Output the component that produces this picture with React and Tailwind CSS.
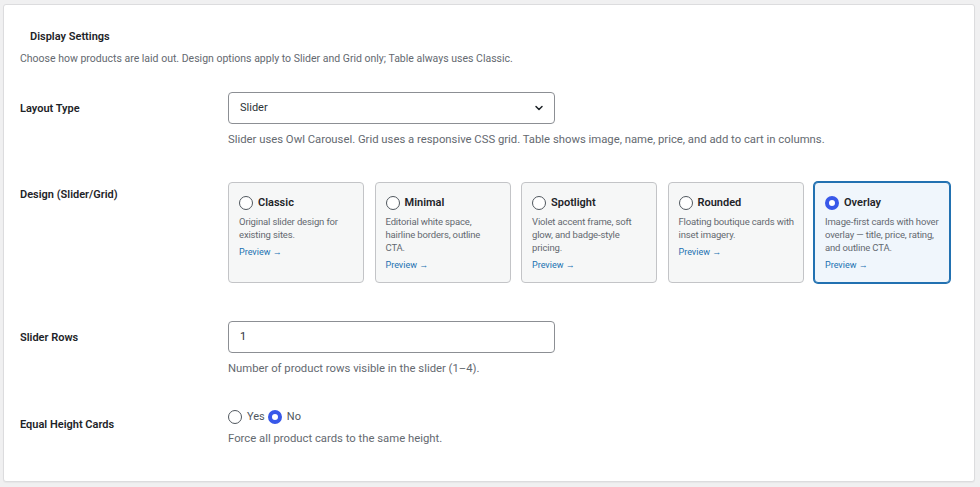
import { useState } from 'react'

const designs = [
    { id: 'classic', name: 'Classic', lines: ['Original slider design for', 'existing sites.'] },
    { id: 'minimal', name: 'Minimal', lines: ['Editorial white space,', 'hairline borders, outline', 'CTA.'] },
    { id: 'spotlight', name: 'Spotlight', lines: ['Violet accent frame, soft', 'glow, and badge-style', 'pricing.'] },
    { id: 'rounded', name: 'Rounded', lines: ['Floating boutique cards with', 'inset imagery.'] },
    { id: 'overlay', name: 'Overlay', lines: ['Image-first cards with hover', 'overlay — title, price, rating,', 'and outline CTA.'] },
]

function Radio({ checked }) {
    return (
        <span
            className={
                checked
                    ? 'inline-block h-[14px] w-[14px] shrink-0 rounded-full border-[4px] border-[#3858e9] bg-white'
                    : 'inline-block h-[14px] w-[14px] shrink-0 rounded-full border border-[#50575e] bg-white'
            }
        />
    )
}

function Row({ label, labelPad, top, children }) {
    return (
        <div className={`flex items-start ${top}`}>
            <div className={`w-[208px] shrink-0 text-[11px] font-semibold leading-4 text-[#1d2327] ${labelPad}`}>
                {label}
            </div>
            <div className="flex-1">{children}</div>
        </div>
    )
}

export default function App() {
    const [design, setDesign] = useState('overlay')
    const [equal, setEqual] = useState('no')

    return (
        <div
            className="h-[487px] w-[980px] overflow-hidden bg-[#f0f0f1] pl-[3px] pt-[4px]"
            style={{ fontFamily: 'Roboto, "Noto Sans", sans-serif' }}
        >
            <div className="h-[478px] w-[972px] rounded-[3px] border border-[#dcdcde] bg-white px-[16px] shadow-[0_1px_1px_rgba(0,0,0,0.04)]">
                <h2 className="ml-[10px] mt-[24px] text-[11px] font-semibold leading-4 text-[#1d2327]">
                    Display Settings
                </h2>
                <p className="mt-[6px] text-[10.5px] leading-4 text-[#646970]">
                    Choose how products are laid out. Design options apply to Slider and Grid only; Table always uses Classic.
                </p>

                <Row label="Layout Type" labelPad="pt-[9px]" top="mt-[25px]">
                    <div className="flex h-[32px] w-[327px] items-center justify-between rounded-[4px] border border-[#8c8f94] bg-white pl-[11px] pr-[10px] text-[11px] text-[#2c3338]">
                        <span>Slider</span>
                        <svg width="10" height="10" viewBox="0 0 10 10" fill="none">
                            <path d="M2 3.5 L5 6.5 L8 3.5" stroke="#1d2327" strokeWidth="1.5" strokeLinecap="round" strokeLinejoin="round" />
                        </svg>
                    </div>
                    <p className="mt-[8px] text-[11.3px] leading-4 text-[#646970]">
                        Slider uses Owl Carousel. Grid uses a responsive CSS grid. Table shows image, name, price, and add to cart in columns.
                    </p>
                </Row>

                <Row label="Design (Slider/Grid)" labelPad="pt-[5px]" top="mt-[34px]">
                    <div className="flex gap-[10.5px]">
                        {designs.map((d) => {
                            const active = design === d.id
                            return (
                                <div
                                    key={d.id}
                                    onClick={() => setDesign(d.id)}
                                    className={
                                        active
                                            ? 'h-[101px] w-[136px] cursor-pointer rounded-[4px] border border-[#2271b1] bg-[#f0f6fc] px-[10px] pt-[12px] shadow-[0_0_0_1px_#2271b1]'
                                            : 'h-[101px] w-[136px] cursor-pointer rounded-[4px] border border-[#c3c4c7] bg-[#f6f7f7] px-[10px] pt-[12px]'
                                    }
                                >
                                    <div className="flex items-center gap-[5px]">
                                        <Radio checked={active} />
                                        <span className="text-[11px] font-semibold leading-4 text-[#1d2327]">{d.name}</span>
                                    </div>
                                    <p className="-mr-[4px] mt-[4px] whitespace-nowrap text-[9.5px] leading-[13px] tracking-[-0.15px] text-[#646970]">
                                        {d.lines.map((line, i) => (
                                            <span key={i} className="block">{line}</span>
                                        ))}
                                    </p>
                                    <p className="mt-[5px] text-[9px] leading-[13px] text-[#2271b1]">Preview →</p>
                                </div>
                            )
                        })}
                    </div>
                </Row>

                <Row label="Slider Rows" labelPad="pt-[9px]" top="mt-[38px]">
                    <div className="flex h-[32px] w-[327px] items-center rounded-[4px] border border-[#8c8f94] bg-white pl-[11px] text-[11px] text-[#2c3338]">
                        1
                    </div>
                    <p className="mt-[8px] text-[11.3px] leading-4 text-[#646970]">
                        Number of product rows visible in the slider (1–4).
                    </p>
                </Row>

                <Row label="Equal Height Cards" labelPad="pt-[8px]" top="mt-[32px]">
                    <div className="flex h-4 items-center text-[11px]">
                        <div onClick={() => setEqual('yes')} className="flex cursor-pointer items-center gap-[5px]">
                            <Radio checked={equal === 'yes'} />
                            <span className="text-[#50575e]">Yes</span>
                        </div>
                        <div onClick={() => setEqual('no')} className="ml-[3px] flex cursor-pointer items-center gap-[5px]">
                            <Radio checked={equal === 'no'} />
                            <span className="text-[#50575e]">No</span>
                        </div>
                    </div>
                    <p className="mt-[6px] text-[11.3px] leading-4 text-[#646970]">
                        Force all product cards to the same height.
                    </p>
                </Row>
            </div>
        </div>
    )
}
